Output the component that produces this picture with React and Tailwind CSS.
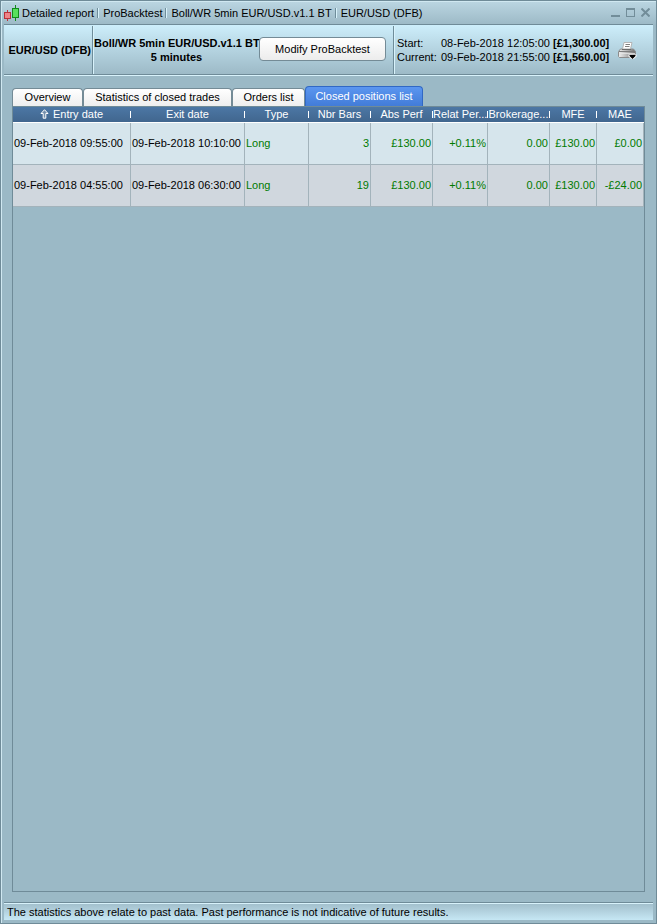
const columns = [
  { label: 'Entry date', width: 'w-[118px]', align: 'text-left', sorted: true },
  { label: 'Exit date', width: 'w-[114px]', align: 'text-left' },
  { label: 'Type', width: 'w-[64px]', align: 'text-left' },
  { label: 'Nbr Bars', width: 'w-[62px]', align: 'text-right' },
  { label: 'Abs Perf', width: 'w-[62px]', align: 'text-right' },
  { label: 'Relat Per...', width: 'w-[55px]', align: 'text-right' },
  { label: 'Brokerage...', width: 'w-[62px]', align: 'text-right' },
  { label: 'MFE', width: 'w-[47px]', align: 'text-right' },
  { label: 'MAE', width: 'w-[47px]', align: 'text-right' },
];

const rows = [
  ['09-Feb-2018 09:55:00', '09-Feb-2018 10:10:00', 'Long', '3', '£130.00', '+0.11%', '0.00', '£130.00', '£0.00'],
  ['09-Feb-2018 04:55:00', '09-Feb-2018 06:30:00', 'Long', '19', '£130.00', '+0.11%', '0.00', '£130.00', '-£24.00'],
];

const titles = ['Detailed report', 'ProBacktest', 'Boll/WR 5min EUR/USD.v1.1 BT', 'EUR/USD (DFB)'];

function CandlesIcon() {
  return (
    <svg width="17" height="16" viewBox="0 0 17 16" shapeRendering="crispEdges" className="shrink-0">
      <path d="M3.500 5v11" stroke="#c03038" />
      <rect x="0.5" y="7.5" width="6" height="6" fill="#ee8488" stroke="#b8303a" />
      <path d="M11.500 0v16" stroke="#128a1c" />
      <rect x="8.5" y="3.5" width="6" height="9" fill="#58e05c" stroke="#128a1c" />
    </svg>
  );
}

function PrinterIcon() {
  return (
    <svg width="20" height="18" viewBox="0 0 20 18" className="block">
      <defs>
        <linearGradient id="printerBody" x1="0" y1="0" x2="1" y2="0">
          <stop offset="0" stopColor="#f0f0f0" />
          <stop offset="0.5" stopColor="#b4b4b4" />
          <stop offset="1" stopColor="#707070" />
        </linearGradient>
      </defs>
      <path d="M3.500 8h13l2 2.500v5l-1 1h-15l-1-1v-5z" fill="url(#printerBody)" stroke="#8c8c8c" />
      <path d="M2 10.500h16" stroke="#7c7c7c" />
      <path d="M2 12.500h16" stroke="#e6e6e6" strokeOpacity="0.8" />
      <path d="M7 1.500h8l-1.500 6.500h-8z" fill="#fff" stroke="#b4b4b4" />
      <path d="M8.500 3.500h4.500M8 5.500h4.500" stroke="#808080" />
      <path d="M5 8.500h9" stroke="#6c6c6c" />
      <path d="M11.500 13.500h8v2l-4 3.500l-4-3.500z" fill="#fff" />
      <path d="M12.500 14h6v1l-3 3l-3-3z" fill="#000" />
    </svg>
  );
}

function SortArrow() {
  return (
    <svg width="9" height="10" viewBox="0 0 9 10" className="mr-1 shrink-0">
      <path d="M4.500 0.700L8 4.500H5.800V9.200H3.200V4.500H1z" fill="#7590ad" stroke="#fff" />
    </svg>
  );
}

function Divider() {
  return <span className="w-[2px] self-stretch border-l border-[#6f8d9a] bg-[#d8f2fb]" />;
}

function Tab({ label, width, active }) {
  return (
    <button
      type="button"
      role="tab"
      aria-selected={!!active}
      className={`${width} shrink-0 rounded-t-[4px] border border-b-0 pb-[2px] whitespace-nowrap ${
        active
          ? 'h-[20px] border-[#3168c4] bg-linear-to-b from-[#5b96f0] to-[#427cd8] text-white'
          : 'h-[18px] border-[#748b96] bg-linear-to-b from-white to-[#eeeeee] text-black'
      }`}
    >
      {label}
    </button>
  );
}

export default function App() {
  return (
    <div className="flex min-h-screen flex-col border border-[#6f8b98] bg-[#9bb9c6] font-['Liberation_Sans',Arial,sans-serif] text-[11px] leading-[14px] text-black">
      <div className="flex grow flex-col border-t border-l border-[#d0e8f1]">
        <header className="flex h-[22px] items-center bg-linear-to-b from-[#bad5e1] to-[#9dbac7] pr-[6px] pl-[2px]">
          <CandlesIcon />
          <ul className="flex grow items-center pl-px">
            {titles.map((title, i) => (
              <li key={title} className="flex items-center whitespace-nowrap">
                {i > 0 && <span className="mr-1 ml-[3px] h-[10px] w-[2px] border-l border-[#6f8d9a] bg-[#d8f2fb]" />}
                {title}
              </li>
            ))}
          </ul>
          <div className="flex items-center gap-[6px] pb-px">
            <button type="button" aria-label="Minimize">
              <svg width="9" height="9" viewBox="0 0 9 9" className="block">
                <path d="M0 8h9" stroke="#728d99" strokeWidth="2" />
              </svg>
            </button>
            <button type="button" aria-label="Maximize">
              <svg width="9" height="9" viewBox="0 0 9 9" className="block" shapeRendering="crispEdges">
                <path d="M0.500 1v7.500h8v-7.500" fill="none" stroke="#728d99" />
                <path d="M0 1h9" stroke="#728d99" strokeWidth="2" />
              </svg>
            </button>
            <button type="button" aria-label="Close">
              <svg width="9" height="9" viewBox="0 0 9 9" className="block">
                <path d="M0.500 0.500l8 8M8.500 0.500l-8 8" stroke="#728d99" strokeWidth="2" />
              </svg>
            </button>
          </div>
        </header>

        <section className="mr-[3px] ml-[2px] flex h-[52px] items-center border-t border-b border-t-[#6f8b98] border-b-[#d8f2fb]">
          <div className="flex h-full grow items-center border-b border-[#6f8b98] bg-linear-to-b from-[#cdeefb] to-[#9dbac7] pt-px">
            <h1 className="w-[88px] shrink-0 pr-px text-right font-bold whitespace-nowrap">EUR/USD (DFB)</h1>
            <Divider />
            <div className="w-[165px] shrink-0 text-center font-bold whitespace-nowrap">
              <p>Boll/WR 5min EUR/USD.v1.1 BT</p>
              <p>5 minutes</p>
            </div>
            <button
              type="button"
              className="mr-[7px] mb-[2px] h-[24px] w-[127px] shrink-0 rounded-[4px] border border-[#748b96] bg-linear-to-b from-white to-[#ececec] whitespace-nowrap"
            >
              Modify ProBacktest
            </button>
            <Divider />
            <dl className="ml-[2px] grid w-[212px] shrink-0 grid-cols-[44px_112px_56px] whitespace-nowrap">
              <dt>Start:</dt>
              <dd>08-Feb-2018 12:05:00</dd>
              <dd className="font-bold">[£1,300.00]</dd>
              <dt>Current:</dt>
              <dd>09-Feb-2018 21:55:00</dd>
              <dd className="font-bold">[£1,560.00]</dd>
            </dl>
            <button type="button" aria-label="Print" className="ml-[8px]">
              <PrinterIcon />
            </button>
          </div>
        </section>

        <main className="mr-[11px] mb-[10px] ml-[10px] flex grow flex-col pt-[10px]">
          <div role="tablist" className="flex items-end">
            <Tab label="Overview" width="w-[71px]" />
            <Tab label="Statistics of closed trades" width="w-[149px]" />
            <Tab label="Orders list" width="w-[73px]" />
            <Tab label="Closed positions list" width="w-[118px]" active />
          </div>
          <div className="grow border border-[#6f8b98]">
            <table className="w-full table-fixed border-separate border-spacing-0">
              <thead>
                <tr className="h-[16px] bg-linear-to-b from-[#4c77a5] to-[#40658d] text-white">
                  {columns.map((col, i) => (
                    <th key={col.label} className={`${col.width} border-b border-white p-0 font-normal whitespace-nowrap`}>
                      <div className="flex h-[15px] items-center">
                        <span className="flex grow items-center justify-center pb-[2px]">
                          {col.sorted && <SortArrow />}
                          {col.label}
                        </span>
                        <span className={`h-[7px] w-px shrink-0 ${i < columns.length - 1 ? 'bg-white' : ''}`} />
                      </div>
                    </th>
                  ))}
                </tr>
              </thead>
              <tbody>
                {rows.map((row) => (
                  <tr key={row[0]} className="h-[42px] odd:bg-[#d6e5ec] even:bg-[#d0d7de]">
                    {row.map((cell, i) => (
                      <td
                        key={columns[i].label}
                        className={`border-r border-b border-[#a3b3bb] px-px pt-0 pb-[2px] whitespace-nowrap ${columns[i].align} ${
                          i < 2 ? 'text-black' : 'text-[#007a00]'
                        }`}
                      >
                        {cell}
                      </td>
                    ))}
                  </tr>
                ))}
              </tbody>
            </table>
          </div>
        </main>

        <footer className="mr-[3px] mb-[3px] ml-[2px] border-t border-[#6f8b98]">
          <p className="h-[17px] border-t border-[#d8f2fb] bg-linear-to-b from-[#a3c0cd] to-[#c6e7f4] pl-[3px] leading-[16px]">
            The statistics above relate to past data. Past performance is not indicative of future results.
          </p>
        </footer>
      </div>
    </div>
  );
}
